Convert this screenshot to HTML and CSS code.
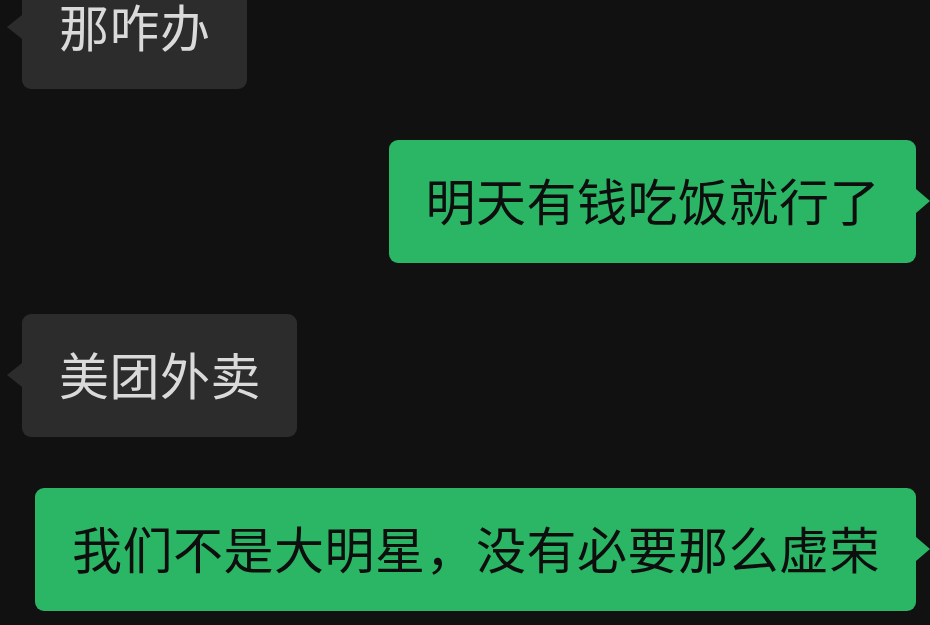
FILE: index.html
```html
<!DOCTYPE html>
<html lang="zh-CN">
<head>
  <meta charset="UTF-8">
  <meta name="viewport" content="width=device-width, initial-scale=1.0">
  <title>聊天</title>
  <link rel="stylesheet" href="styles.css">
</head>
<body>
  <div class="chat">
    <div class="row left first">
      <div class="bubble other">那咋办</div>
    </div>
    <div class="row right">
      <div class="bubble mine">明天有钱吃饭就行了</div>
    </div>
    <div class="row left">
      <div class="bubble other">美团外卖</div>
    </div>
    <div class="row right">
      <div class="bubble mine">我们不是大明星，没有必要那么虚荣</div>
    </div>
  </div>
</body>
</html>
```

FILE: styles.css
```css
body {
  margin: 0;
  background-color: #111111;
  font-family: "Noto Sans CJK SC", "Noto Sans", sans-serif;
  overflow: hidden;
}
.chat {
  display: flex;
  flex-direction: column;
  gap: 51.5px;
}
.row {
  display: flex;
}
.row.first {
  margin-top: -34px;
}
.left {
  justify-content: flex-start;
  padding-left: 22px;
}
.right {
  justify-content: flex-end;
  padding-right: 14px;
}
.bubble {
  position: relative;
  font-size: 50px;
  line-height: 50px;
  letter-spacing: 0.5px;
  padding: 34px 36px 38.5px 37px;
  border-radius: 9px;
  white-space: nowrap;
}
.other {
  background-color: #2c2c2c;
  color: #dadada;
}
.mine {
  background-color: #2bb665;
  color: #0e0e0e;
}
.bubble::after {
  content: "";
  position: absolute;
  top: 50%;
  margin-top: -12px;
  border-top: 12px solid transparent;
  border-bottom: 12px solid transparent;
}
.other::after {
  left: -15px;
  border-right: 15px solid #2c2c2c;
}
.mine::after {
  right: -14px;
  border-left: 14px solid #2bb665;
}
```
